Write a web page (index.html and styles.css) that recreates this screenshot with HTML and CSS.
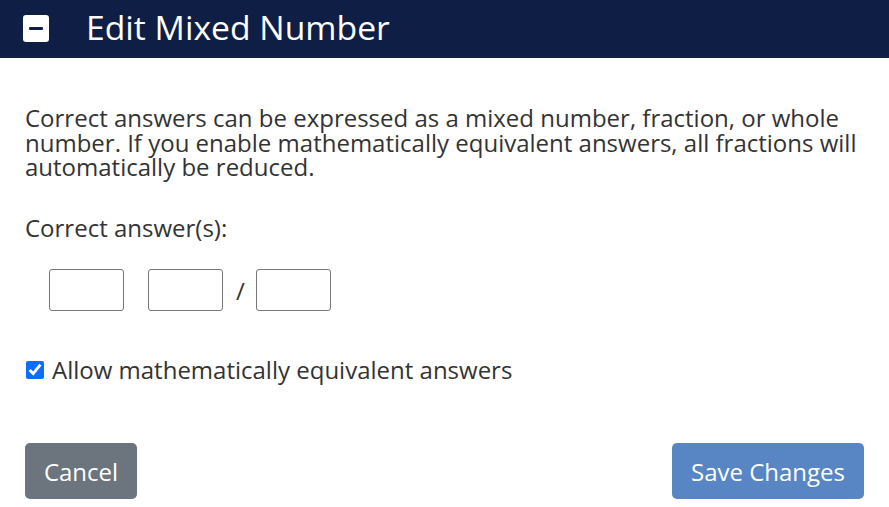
FILE: index.html
```html
<!DOCTYPE html>
<html>
<head>
<meta charset="utf-8">
<link rel="stylesheet" href="styles.css">
</head>
<body>
<div class="header">
  <span class="collapse-icon"><span class="bar"></span></span>
  <h1 class="title">Edit Mixed Number</h1>
</div>
<div class="content">
  <p class="intro">Correct answers can be expressed as a mixed number, fraction, or whole number. If you enable mathematically equivalent answers, all fractions will automatically be reduced.</p>
  <p class="label">Correct answer(s):</p>
  <div class="answer-row">
    <input class="box" type="text">
    <input class="box" type="text">
    <span class="slash">/</span>
    <input class="box" type="text">
  </div>
  <label class="check-row">
    <input class="check" type="checkbox" checked>
    <span>Allow mathematically equivalent answers</span>
  </label>
  <div class="actions">
    <button class="btn btn-cancel">Cancel</button>
    <button class="btn btn-save">Save Changes</button>
  </div>
</div>
</body>
</html>
```
FILE: styles.css
```css
html, body {
  margin: 0;
  padding: 0;
  background: #fff;
  font-family: "Open Sans", "Noto Sans", sans-serif;
  color: #333;
}
.header {
  height: 58px;
  background: #0e1e45;
  display: flex;
  align-items: center;
  padding-left: 23px;
}
.collapse-icon {
  width: 26px;
  height: 27px;
  background: #fff;
  border-radius: 3px;
  display: flex;
  align-items: center;
  justify-content: center;
  margin-top: -1px;
}
.collapse-icon .bar {
  width: 14px;
  height: 3px;
  background: #0e1e45;
  border-radius: 1px;
}
.title {
  margin: 0 0 0 37px;
  font-weight: 400;
  font-size: 33.7px;
  color: #fff;
  line-height: 1;
  margin-top: -2px;
}
.content {
  padding: 0 25px;
}
.intro {
  margin: 48px 0 0 0;
  font-size: 24px;
  line-height: 24.5px;
}
.label {
  margin: 36px 0 0 0;
  font-size: 24px;
  line-height: 24.5px;
}
.answer-row {
  margin-top: 29px;
  padding-left: 24px;
  display: flex;
  align-items: center;
}
.box {
  box-sizing: border-box;
  width: 75px;
  height: 42px;
  border: 1px solid #767676;
  border-radius: 3px;
  margin: 0 24px 0 0;
  padding: 0;
  font-size: 20px;
}
.slash {
  font-size: 24px;
  margin: 0 11px 0 -11px;
  color: #333;
}
.answer-row .box:last-child {
  margin-right: 0;
}
.check-row {
  margin-top: 46px;
  display: flex;
  align-items: center;
  font-size: 24px;
  line-height: 25px;
}
.check {
  width: 18px;
  height: 18px;
  margin: 0 8px 0 1px;
  accent-color: #0d6efd;
}
.actions {
  margin-top: 61px;
  display: flex;
  justify-content: space-between;
}
.btn {
  height: 56px;
  border: none;
  border-radius: 5px;
  font-family: "Open Sans", "Noto Sans", sans-serif;
  font-size: 24px;
  color: #fff;
  padding: 0 10px;
}
.btn-cancel {
  background: #6c757d;
  width: 112px;
}
.btn-save {
  background: #5886c5;
  width: 192px;
}
```
